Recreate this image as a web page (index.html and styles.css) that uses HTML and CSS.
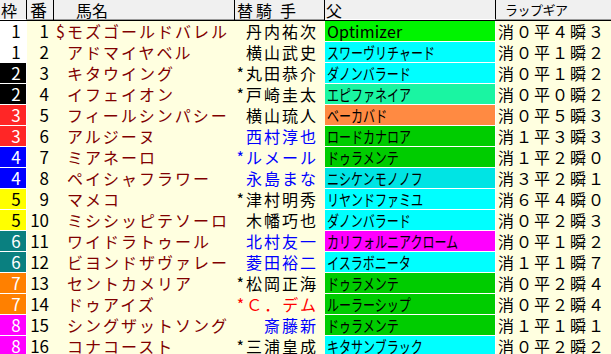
FILE: index.html
```html
<!DOCTYPE html>
<html lang="ja">
<head>
<meta charset="utf-8">
<title>ラップギア</title>
<link rel="stylesheet" href="styles.css">
</head>
<body>
<div class="sheet">
  <div class="row head">
    <div class="c waku">枠</div>
    <div class="c ban">番</div>
    <div class="c name">馬名</div>
    <div class="c jockey"><span class="kae">替</span><span class="kishu">騎手</span></div>
    <div class="c sire">父</div>
    <div class="c lap">ラップギア</div>
  </div>

  <div class="row">
    <div class="c waku f1">1</div><div class="c ban">1</div>
    <div class="c name"><span class="mark">$</span>モズゴールドバレル</div>
    <div class="c jockey">丹内祐次</div>
    <div class="c sire s-lime"><span class="latin">Optimizer</span></div>
    <div class="c lap">消０平４瞬３</div>
  </div>
  <div class="row">
    <div class="c waku f1">1</div><div class="c ban">2</div>
    <div class="c name"><span class="mark"></span>アドマイヤベル</div>
    <div class="c jockey">横山武史</div>
    <div class="c sire s-cyan"><span class="kana">スワーヴリチャード</span></div>
    <div class="c lap">消０平１瞬２</div>
  </div>
  <div class="row">
    <div class="c waku f2">2</div><div class="c ban">3</div>
    <div class="c name"><span class="mark"></span>キタウイング</div>
    <div class="c jockey">*丸田恭介</div>
    <div class="c sire s-cyan"><span class="kana">ダノンバラード</span></div>
    <div class="c lap">消０平１瞬２</div>
  </div>
  <div class="row">
    <div class="c waku f2">2</div><div class="c ban">4</div>
    <div class="c name"><span class="mark"></span>イフェイオン</div>
    <div class="c jockey">*戸崎圭太</div>
    <div class="c sire s-spring"><span class="kana">エピファネイア</span></div>
    <div class="c lap">消０平０瞬２</div>
  </div>
  <div class="row">
    <div class="c waku f3">3</div><div class="c ban">5</div>
    <div class="c name"><span class="mark"></span>フィールシンパシー</div>
    <div class="c jockey">横山琉人</div>
    <div class="c sire s-orange"><span class="kana">ベーカバド</span></div>
    <div class="c lap">消０平５瞬３</div>
  </div>
  <div class="row">
    <div class="c waku f3">3</div><div class="c ban">6</div>
    <div class="c name"><span class="mark"></span>アルジーヌ</div>
    <div class="c jockey j-blue">西村淳也</div>
    <div class="c sire s-green"><span class="kana">ロードカナロア</span></div>
    <div class="c lap">消１平３瞬３</div>
  </div>
  <div class="row">
    <div class="c waku f4">4</div><div class="c ban">7</div>
    <div class="c name"><span class="mark"></span>ミアネーロ</div>
    <div class="c jockey j-blue">*ルメール</div>
    <div class="c sire s-green"><span class="kana">ドゥラメンテ</span></div>
    <div class="c lap">消１平２瞬０</div>
  </div>
  <div class="row">
    <div class="c waku f4">4</div><div class="c ban">8</div>
    <div class="c name"><span class="mark"></span>ペイシャフラワー</div>
    <div class="c jockey j-blue">永島まな</div>
    <div class="c sire s-turq"><span class="kana">ニシケンモノノフ</span></div>
    <div class="c lap">消３平２瞬１</div>
  </div>
  <div class="row">
    <div class="c waku f5">5</div><div class="c ban">9</div>
    <div class="c name"><span class="mark"></span>マメコ</div>
    <div class="c jockey">*津村明秀</div>
    <div class="c sire s-cyan"><span class="kana">リヤンドファミユ</span></div>
    <div class="c lap">消６平４瞬０</div>
  </div>
  <div class="row">
    <div class="c waku f5">5</div><div class="c ban">10</div>
    <div class="c name"><span class="mark"></span>ミシシッピテソーロ</div>
    <div class="c jockey">木幡巧也</div>
    <div class="c sire s-cyan"><span class="kana">ダノンバラード</span></div>
    <div class="c lap">消０平２瞬３</div>
  </div>
  <div class="row">
    <div class="c waku f6">6</div><div class="c ban">11</div>
    <div class="c name"><span class="mark"></span>ワイドラトゥール</div>
    <div class="c jockey j-blue">北村友一</div>
    <div class="c sire s-magenta"><span class="kana">カリフォルニアクローム</span></div>
    <div class="c lap">消０平１瞬２</div>
  </div>
  <div class="row">
    <div class="c waku f6">6</div><div class="c ban">12</div>
    <div class="c name"><span class="mark"></span>ビヨンドザヴァレー</div>
    <div class="c jockey j-blue">菱田裕二</div>
    <div class="c sire s-cyan"><span class="kana">イスラボニータ</span></div>
    <div class="c lap">消１平１瞬７</div>
  </div>
  <div class="row">
    <div class="c waku f7">7</div><div class="c ban">13</div>
    <div class="c name"><span class="mark"></span>セントカメリア</div>
    <div class="c jockey">*松岡正海</div>
    <div class="c sire s-green"><span class="kana">ドゥラメンテ</span></div>
    <div class="c lap">消０平２瞬４</div>
  </div>
  <div class="row">
    <div class="c waku f7">7</div><div class="c ban">14</div>
    <div class="c name"><span class="mark"></span>ドゥアイズ</div>
    <div class="c jockey j-red">*Ｃ．デム</div>
    <div class="c sire s-green"><span class="kana">ルーラーシップ</span></div>
    <div class="c lap">消０平２瞬４</div>
  </div>
  <div class="row">
    <div class="c waku f8">8</div><div class="c ban">15</div>
    <div class="c name"><span class="mark"></span>シングザットソング</div>
    <div class="c jockey j-blue">斎藤新</div>
    <div class="c sire s-green"><span class="kana">ドゥラメンテ</span></div>
    <div class="c lap">消１平１瞬１</div>
  </div>
  <div class="row">
    <div class="c waku f8">8</div><div class="c ban">16</div>
    <div class="c name"><span class="mark"></span>コナコースト</div>
    <div class="c jockey">*三浦皇成</div>
    <div class="c sire s-cyan"><span class="kana">キタサンブラック</span></div>
    <div class="c lap">消０平２瞬２</div>
  </div>
</div>
</body>
</html>
```

FILE: styles.css
```css
* {
  box-sizing: border-box;
  margin: 0;
  padding: 0;
}

html,
body {
  background: #ffffe0;
}

body {
  width: 611px;
  height: 354px;
  overflow: hidden;
  font-family: "Noto Sans CJK JP", "Noto Sans", sans-serif;
  font-size: 16px;
  color: #000;
}

.sheet {
  display: flex;
  flex-direction: column;
}

.row {
  display: grid;
  grid-template-columns: 27px 27px 181px 90px 171px 115px;
  height: 21px;
  line-height: 20px;
  white-space: nowrap;
}

.c {
  overflow: hidden;
}

/* header */
.head {
  background: #f0f0f0;
  border-bottom: 1px solid #000;
  box-shadow: inset 0 -1px 0 #9a9a9a;
}

.head .c {
  height: 20px;
  border-right: 1px solid #000;
  letter-spacing: 0;
}

.head .lap {
  border-right: 0;
}

.head .waku {
  padding-left: 1px;
  text-align: left;
  color: #000;
  font-size: 16px;
}

.head .ban {
  padding-left: 3px;
  text-align: left;
  font-size: 17px;
}

.head .name {
  padding-left: 22px;
  color: #000;
}

.head .jockey {
  padding-left: 2px;
  padding-right: 0;
  text-align: left;
  color: #000;
}

.head .kae {
  letter-spacing: 3px;
}

.head .kishu {
  letter-spacing: 8px;
}

.head .sire {
  padding-left: 1px;
}

.head .lap {
  padding-left: 9px;
  font-size: 13px;
  letter-spacing: -0.5px;
}

/* body cells */
.waku {
  border-right: 1px solid #fff;
  border-bottom: 1px solid #fff;
  padding-left: 6px;
  text-align: center;
  font-size: 17px;
  color: #fff;
}

.f1 { background: #ffffff; color: #000; }
.f2 { background: #000000; }
.f3 { background: #ff2626; }
.f4 { background: #0000ff; }
.f5 { background: #ffff00; color: #000; }
.f6 { background: #0a8080; }
.f7 { background: #ff8000; }
.f8 { background: #ff00ff; }

.ban {
  padding-right: 5px;
  text-align: right;
  font-size: 17px;
}

.name {
  padding-left: 2px;
  color: #800000;
  letter-spacing: 2px;
}

.mark {
  display: inline-block;
  width: 11px;
  letter-spacing: 0;
}

.jockey {
  padding-right: 7px;
  text-align: right;
  letter-spacing: 2px;
}

.j-blue { color: #0000ff; }
.j-red { color: #ff0000; }

.sire {
  border-right: 1px solid #fff;
  border-bottom: 1px solid #fff;
  padding-left: 2px;
}

.s-lime { background: #00f400; }
.s-cyan { background: #00ffff; }
.s-spring { background: #1af5a2; }
.s-orange { background: #ff8a42; }
.s-green { background: #00cc00; }
.s-turq { background: #00e4e4; }
.s-magenta { background: #ff00ff; }

.latin {
  letter-spacing: 0.2px;
}

.kana {
  display: inline-block;
  transform: scaleX(0.75);
  transform-origin: left center;
}

.lap {
  padding-left: 2px;
  letter-spacing: 2px;
}
```
